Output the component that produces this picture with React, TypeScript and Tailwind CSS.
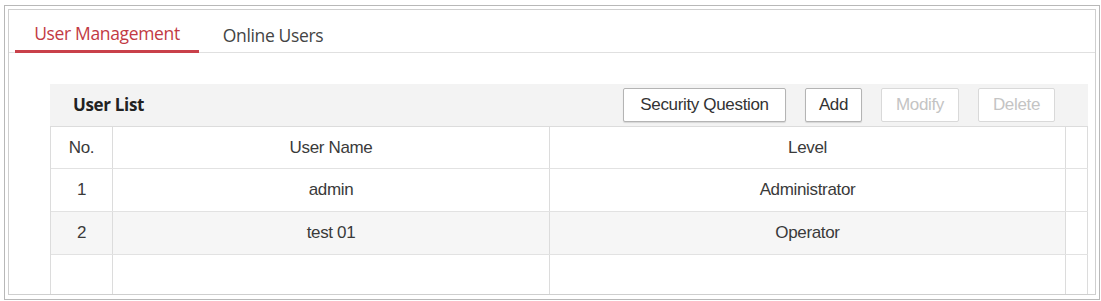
import React from "react";

const rows = [
  { no: "1", name: "admin", level: "Administrator" },
  { no: "2", name: "test 01", level: "Operator" },
  { no: "", name: "", level: "" },
];

function Button({ label, disabled, width }: { label: string; disabled?: boolean; width: string }) {
  return (
    <button
      className={`h-[34px] ${width} bg-white rounded-[2px] text-[17px] tracking-[-0.02em] ${
        disabled
          ? "border border-[#d9d9d9] text-[#c4c4c4]"
          : "border border-[#b4b4b4] text-[#333] shadow-[0_1px_1px_rgba(0,0,0,0.12)]"
      }`}
    >
      {label}
    </button>
  );
}

export default function App() {
  return (
    <div className="w-[1101px] h-[301px] bg-white pt-[5px] pl-[4px] font-['Liberation_Sans',Arial,sans-serif]">
      <div className="w-[1096px] h-[295px] border border-[#b8b8b8] p-[3px] pb-[4px]">
        <div className="w-full h-full border border-[#cfcfcf] overflow-hidden">
          <div className="flex items-end h-[43px] border-b border-[#e0e0e0] pl-[6px] font-['Open_Sans',sans-serif] text-[17.5px]">
            <div className="w-[184px] h-[43px] pt-[7px] -mb-px flex items-center justify-center border-b-[3px] border-[#c9404a] text-[#c23a44] font-medium tracking-[-0.02em]">
              User Management
            </div>
            <div className="w-[148px] h-[43px] pt-[7px] -mb-px flex items-center justify-center text-[#444] tracking-[-0.02em]">
              Online Users
            </div>
          </div>

          <div className="ml-[41px] mt-[31px] w-[1038px]">
            <div className="h-[42px] bg-[#f3f3f3] flex items-center pl-[23px] pr-[33px]">
              <span className="font-['Open_Sans',sans-serif] font-bold text-[17px] text-[#222] tracking-[-0.02em]">
                User List
              </span>
              <div className="ml-auto flex items-center gap-[19px]">
                <Button label="Security Question" width="w-[163px]" />
                <Button label="Add" width="w-[57px]" />
                <Button label="Modify" width="w-[78px]" disabled />
                <Button label="Delete" width="w-[77px]" disabled />
              </div>
            </div>

            <div className="border-t border-l border-[#dcdcdc] text-[17px] text-[#3a3a3a] tracking-[-0.02em]">
              <div className="flex h-[42px] border-b border-[#e2e2e2]">
                <div className="w-[62px] flex items-center justify-center border-r border-[#dcdcdc]">No.</div>
                <div className="w-[437px] flex items-center justify-center border-r border-[#dcdcdc]">User Name</div>
                <div className="w-[516px] flex items-center justify-center border-r border-[#dcdcdc]">Level</div>
                <div className="flex-1 border-r border-[#dcdcdc]" />
              </div>
              {rows.map((r, i) => (
                <div
                  key={i}
                  className={`flex border-b border-[#e2e2e2] ${i === 2 ? "h-[50px]" : "h-[43px]"} ${
                    i === 1 ? "bg-[#f6f6f6]" : "bg-white"
                  }`}
                >
                  <div className="w-[62px] flex items-center justify-center border-r border-[#dcdcdc]">{r.no}</div>
                  <div className="w-[437px] flex items-center justify-center border-r border-[#dcdcdc]">{r.name}</div>
                  <div className="w-[516px] flex items-center justify-center border-r border-[#dcdcdc]">{r.level}</div>
                  <div className="flex-1 border-r border-[#dcdcdc] bg-white" />
                </div>
              ))}
            </div>
          </div>
        </div>
      </div>
    </div>
  );
}
